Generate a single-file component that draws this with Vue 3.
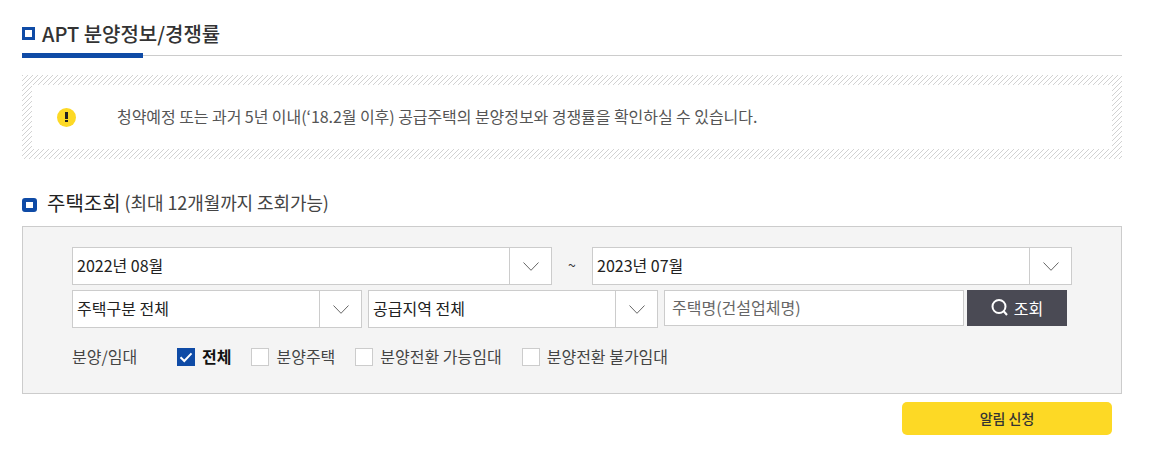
<script setup>
const options = [
  { label: '전체', checked: true },
  { label: '분양주택', checked: false },
  { label: '분양전환 가능임대', checked: false },
  { label: '분양전환 불가임대', checked: false },
]
</script>

<template>
  <div class="page">
    <header class="head">
      <span class="sq"></span>
      <h1>APT 분양정보/경쟁률</h1>
    </header>

    <div class="notice">
      <div class="notice-in">
        <span class="warn"><i></i><b></b></span>
        <p>청약예정 또는 과거 5년 이내(‘18.2월 이후) 공급주택의 분양정보와 경쟁률을 확인하실 수 있습니다.</p>
      </div>
    </div>

    <div class="sub">
      <span class="sq2"></span>
      <h2>주택조회</h2>
      <span class="hint">(최대 12개월까지 조회가능)</span>
    </div>

    <section class="panel">
      <div class="row r1">
        <div class="sel w480"><span>2022년 08월</span><em><svg viewBox="0 0 16 9" width="16" height="9"><path d="M.5.5 8 8.3 15.5.5" fill="none" stroke="#666" /></svg></em></div>
        <span class="tilde">~</span>
        <div class="sel w480"><span>2023년 07월</span><em><svg viewBox="0 0 16 9" width="16" height="9"><path d="M.5.5 8 8.3 15.5.5" fill="none" stroke="#666" /></svg></em></div>
      </div>
      <div class="row r2">
        <div class="sel w290"><span>주택구분 전체</span><em><svg viewBox="0 0 16 9" width="16" height="9"><path d="M.5.5 8 8.3 15.5.5" fill="none" stroke="#666" /></svg></em></div>
        <div class="sel w290"><span>공급지역 전체</span><em><svg viewBox="0 0 16 9" width="16" height="9"><path d="M.5.5 8 8.3 15.5.5" fill="none" stroke="#666" /></svg></em></div>
        <div class="input">주택명(건설업체명)</div>
        <button class="search" type="button">
          <svg viewBox="0 0 17 17" width="17" height="17"><circle cx="8" cy="7.5" r="6.5" fill="none" stroke="#fff" stroke-width="2" /><path d="M12.5 12l3.5 4" stroke="#fff" stroke-width="2" /></svg>
          <span>조회</span>
        </button>
      </div>
      <div class="row r3">
        <span class="lab">분양/임대</span>
        <div class="checks">
          <label v-for="o in options" :key="o.label" class="chk" :class="{ on: o.checked }">
            <span class="box">
              <svg v-if="o.checked" viewBox="0 0 18 18" width="18" height="18"><path d="M3.5 9.2 7.3 13l7.2-7.6" fill="none" stroke="#fff" stroke-width="2" /></svg>
            </span>
            <span class="txt">{{ o.label }}</span>
          </label>
        </div>
      </div>
    </section>

    <div class="foot"><button class="alarm" type="button">알림 신청</button></div>
  </div>
</template>

<style scoped>
.page {
  width: 1100px;
  margin-left: 22px;
  padding-top: 18px;
  font-family: "Noto Sans CJK KR", "Noto Sans", sans-serif;
  color: #222;
}
.head {
  height: 38px;
  display: flex;
  align-items: center;
  gap: 7px;
  padding-bottom: 6px;
  box-sizing: border-box;
  border-bottom: 1px solid #ccc;
  position: relative;
}
.head::after {
  content: "";
  position: absolute;
  left: 0;
  bottom: -3px;
  width: 121px;
  height: 5px;
  background: #0f4ba6;
}
.sq {
  width: 13px;
  height: 13px;
  border: 3px solid #0f4ba6;
  box-sizing: border-box;
}
h1 {
  margin: 0;
  font-size: 20px;
  font-weight: 500;
  color: #333;
  line-height: 26px;
}
.notice {
  margin-top: 19px;
  height: 84px;
  box-sizing: border-box;
  padding: 10px;
  background: #fff url("data:image/svg+xml,%3Csvg xmlns='http://www.w3.org/2000/svg' width='5' height='10' shape-rendering='crispEdges'%3E%3Cg fill='%23d2d2d2'%3E%3Crect x='0' y='0' width='1' height='1'/%3E%3Crect x='3' y='2' width='1' height='1'/%3E%3Crect x='1' y='4' width='1' height='1'/%3E%3Crect x='4' y='6' width='1' height='1'/%3E%3Crect x='2' y='8' width='1' height='1'/%3E%3Crect x='4' y='1' width='1' height='1'/%3E%3Crect x='2' y='3' width='1' height='1'/%3E%3Crect x='0' y='5' width='1' height='1'/%3E%3Crect x='3' y='7' width='1' height='1'/%3E%3Crect x='1' y='9' width='1' height='1'/%3E%3C/g%3E%3C/svg%3E") 0 0 / 5px 10px;
}
.notice-in {
  height: 100%;
  background: #fff;
  display: flex;
  align-items: center;
  padding-left: 25px;
}
.warn {
  width: 19px;
  height: 19px;
  border-radius: 50%;
  background: #fdd925;
  display: flex;
  flex-direction: column;
  align-items: center;
  justify-content: center;
  gap: 1px;
  margin-right: 41px;
}
.warn i {
  width: 3px;
  height: 7px;
  background: #222;
}
.warn b {
  width: 3px;
  height: 2px;
  background: #222;
}
.notice p {
  margin: 0 0 2px;
  font-size: 16px;
  letter-spacing: -0.06px;
  color: #555;
}
.sub {
  margin-top: 32px;
  height: 24px;
  display: flex;
  align-items: center;
}
.sq2 {
  width: 15px;
  height: 14px;
  box-sizing: border-box;
  border: 4px solid #0f4ba6;
  border-radius: 3px;
  margin-right: 10px;
  margin-top: 3px;
}
h2 {
  margin: 0 0 2px;
  font-size: 20px;
  font-weight: 400;
  color: #222;
}
.hint {
  font-size: 18px;
  letter-spacing: -0.1px;
  color: #444;
  margin: 0 0 2px 4px;
}
.panel {
  margin-top: 11px;
  height: 168px;
  box-sizing: border-box;
  border: 1px solid #ccc;
  background: #f4f4f4;
  padding: 20px 49px 0;
}
.row {
  display: flex;
}
.r2 {
  margin-top: 5px;
  gap: 6px;
}
.sel {
  height: 38px;
  box-sizing: border-box;
  border: 1px solid #ccc;
  background: #fff;
  display: flex;
  font-size: 16px;
  color: #222;
}
.sel span {
  flex: 1;
  padding-left: 4px;
  line-height: 34px;
}
.sel em {
  width: 41px;
  border-left: 1px solid #ccc;
  display: flex;
  align-items: center;
  justify-content: center;
}
.w480 { width: 480px; }
.w290 { width: 290px; }
.tilde {
  width: 40px;
  text-align: center;
  font-size: 14px;
  line-height: 36px;
  color: #333;
}
.input {
  width: 300px;
  height: 36px;
  box-sizing: border-box;
  border: 1px solid #ccc;
  background: #fff;
  padding-left: 7px;
  font-size: 16px;
  line-height: 33px;
  color: #666;
}
.search {
  width: 100px;
  height: 36px;
  margin-left: -3px;
  border: 0;
  background: #4a4a54;
  color: #fff;
  font: inherit;
  font-size: 16px;
  display: flex;
  align-items: center;
  justify-content: center;
  gap: 6px;
  padding: 0 0 1px;
}
.r3 {
  margin-top: 19px;
  align-items: center;
  height: 20px;
  font-size: 16px;
}
.lab {
  width: 105px;
  color: #444;
  margin-bottom: 2px;
}
.checks {
  display: flex;
  gap: 20px;
}
.chk {
  display: flex;
  align-items: center;
  gap: 7px;
  color: #444;
}
.chk.on {
  font-weight: 700;
  color: #111;
}
.txt {
  margin-bottom: 2px;
}
.box {
  width: 18px;
  height: 18px;
  box-sizing: border-box;
  border: 1px solid #ccc;
  background: #fff;
  display: block;
}
.on .box {
  border: 0;
  background: #0f4ba6;
}
.box svg {
  display: block;
}
.foot {
  display: flex;
  justify-content: flex-end;
  padding: 8px 10px 0 0;
}
.alarm {
  width: 210px;
  height: 33px;
  border: 0;
  border-radius: 5px;
  background: #fdd925;
  font: inherit;
  font-size: 14px;
  font-weight: 500;
  color: #333;
  padding: 0 0 2px;
}
</style>
